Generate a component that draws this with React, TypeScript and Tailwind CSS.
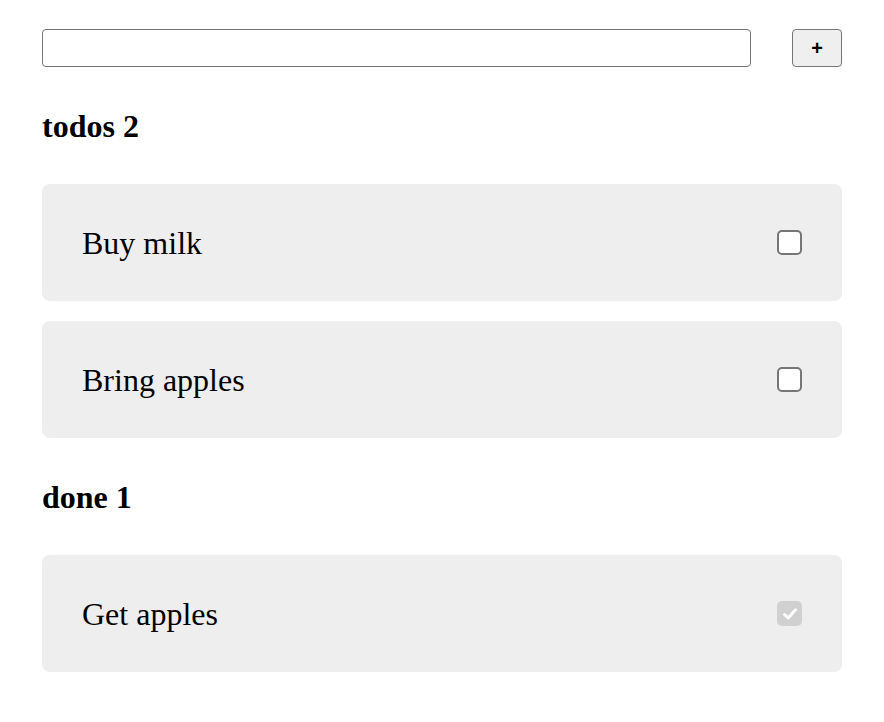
import React, { useState } from 'react';

type Todo = { id: number; text: string; done: boolean };

const initial: Todo[] = [
  { id: 1, text: 'Buy milk', done: false },
  { id: 2, text: 'Bring apples', done: false },
  { id: 3, text: 'Get apples', done: true },
];

const Box = ({ checked, onClick }: { checked: boolean; onClick?: () => void }) =>
  checked ? (
    <span className="flex h-[25px] w-[25px] items-center justify-center rounded-[5px] bg-[#d0d0d0]">
      <svg width="18" height="18" viewBox="0 0 18 18" fill="none">
        <path d="M3.5 9.5 L7.2 13 L14.5 4.8" stroke="#fff" strokeWidth="3" strokeLinecap="round" strokeLinejoin="round" />
      </svg>
    </span>
  ) : (
    <span
      onClick={onClick}
      className="block h-[25px] w-[25px] cursor-pointer rounded-[5px] border-2 border-[#767676] bg-white"
    />
  );

const Card = ({ todo, onToggle }: { todo: Todo; onToggle: () => void }) => (
  <div className="flex h-[117px] items-center justify-between rounded-[8px] bg-[#eeeeee] pl-10 pr-[40px]">
    <span className="text-[32px] leading-none text-black">{todo.text}</span>
    <Box checked={todo.done} onClick={onToggle} />
  </div>
);

export default function App() {
  const [todos, setTodos] = useState<Todo[]>(initial);
  const [text, setText] = useState('');

  const add = () => {
    if (!text.trim()) return;
    setTodos([...todos, { id: Date.now(), text: text.trim(), done: false }]);
    setText('');
  };
  const toggle = (id: number) =>
    setTodos(todos.map((t) => (t.id === id ? { ...t, done: !t.done } : t)));

  const open = todos.filter((t) => !t.done);
  const done = todos.filter((t) => t.done);

  return (
    <div className="min-h-screen bg-white font-['Liberation_Serif','Times_New_Roman',serif] text-black">
      <div className="mx-auto flex w-[800px] flex-col pt-[29px]">
        <div className="flex gap-[41px]">
          <input
            value={text}
            onChange={(e) => setText(e.target.value)}
            className="h-[38px] flex-1 rounded-[4px] border-[1.5px] border-[#767676] bg-white px-2 text-[16px] outline-none"
          />
          <button
            onClick={add}
            className="h-[38px] w-[50px] rounded-[4px] border-[1.5px] border-[#767676] bg-[#efefef] font-['Liberation_Sans',Arial,sans-serif] text-[20px] font-bold leading-none"
          >
            +
          </button>
        </div>

        <h2 className="mt-[41px] mb-[40px] h-[36px] text-[32px] font-bold leading-[36px]">todos {open.length}</h2>
        <div className="flex flex-col gap-[20px]">
          {open.map((t) => (
            <Card key={t.id} todo={t} onToggle={() => toggle(t.id)} />
          ))}
        </div>

        <h2 className="mt-[41px] mb-[40px] h-[36px] text-[32px] font-bold leading-[36px]">done {done.length}</h2>
        <div className="flex flex-col gap-[20px]">
          {done.map((t) => (
            <Card key={t.id} todo={t} onToggle={() => toggle(t.id)} />
          ))}
        </div>
      </div>
    </div>
  );
}
